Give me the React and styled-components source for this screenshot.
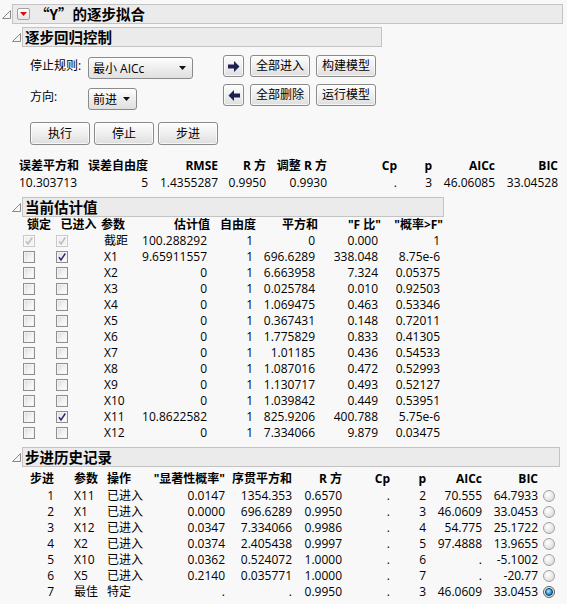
import React from "react";
import styled, { createGlobalStyle } from "styled-components";

const GlobalStyle = createGlobalStyle`
  body {
    margin: 0;
    background: #f8f8f8;
    font-family: "Open Sans", "Noto Sans CJK SC", sans-serif;
    font-size: 12px;
    color: #000;
  }
`;

const statsCols = [
  { w: 69, a: "left" },
  { w: 66, a: "right" },
  { w: 70, a: "right" },
  { w: 48, a: "right" },
  { w: 61, a: "right" },
  { w: 70, a: "right" },
  { w: 35, a: "right" },
  { w: 63, a: "right" },
  { w: 63, a: "right" },
];
const statsHead = ["误差平方和", "误差自由度", "RMSE", "R 方", "调整 R 方", "Cp", "p", "AICc", "BIC"];
const statsRow = ["10.303713", "5", "1.4355287", "0.9950", "0.9930", ".", "3", "46.06085", "33.04528"];

const estCols = [
  { w: 34, a: "left", pl: 1, ha: "center" },
  { w: 45, a: "left", pl: 0, ha: "center" },
  { w: 38, a: "left" },
  { w: 71, a: "right" },
  { w: 46, a: "right" },
  { w: 62, a: "right" },
  { w: 63, a: "right" },
  { w: 62, a: "right" },
];
const estHead = ["锁定", "已进入", "参数", "估计值", "自由度", "平方和", '"F 比"', '"概率>F"'];
const estimates = [
  ["截距", "100.288292", "1", "0", "0.000", "1", true, "fixed"],
  ["X1", "9.65911557", "1", "696.6289", "338.048", "8.75e-6", true],
  ["X2", "0", "1", "6.663958", "7.324", "0.05375"],
  ["X3", "0", "1", "0.025784", "0.010", "0.92503"],
  ["X4", "0", "1", "1.069475", "0.463", "0.53346"],
  ["X5", "0", "1", "0.367431", "0.148", "0.72011"],
  ["X6", "0", "1", "1.775829", "0.833", "0.41305"],
  ["X7", "0", "1", "1.01185", "0.436", "0.54533"],
  ["X8", "0", "1", "1.087016", "0.472", "0.52993"],
  ["X9", "0", "1", "1.130717", "0.493", "0.52127"],
  ["X10", "0", "1", "1.039842", "0.449", "0.53951"],
  ["X11", "10.8622582", "1", "825.9206", "400.788", "5.75e-6", true],
  ["X12", "0", "1", "7.334066", "9.879", "0.03475"],
];

const histCols = [
  { w: 51, a: "right", pr: 17 },
  { w: 33, a: "left" },
  { w: 44, a: "left" },
  { w: 80, a: "right" },
  { w: 67, a: "right" },
  { w: 50, a: "right" },
  { w: 48, a: "right" },
  { w: 36, a: "right" },
  { w: 56, a: "right" },
  { w: 56, a: "right" },
  { w: 18, a: "left", pl: 2 },
];
const histHead = ["步进", "参数", "操作", '"显著性概率"', "序贯平方和", "R 方", "Cp", "p", "AICc", "BIC", ""];
const history = [
  ["1", "X11", "已进入", "0.0147", "1354.353", "0.6570", ".", "2", "70.555", "64.7933"],
  ["2", "X1", "已进入", "0.0000", "696.6289", "0.9950", ".", "3", "46.0609", "33.0453"],
  ["3", "X12", "已进入", "0.0347", "7.334066", "0.9986", ".", "4", "54.775", "25.1722"],
  ["4", "X2", "已进入", "0.0374", "2.405438", "0.9997", ".", "5", "97.4888", "13.9655"],
  ["5", "X10", "已进入", "0.0362", "0.524072", "1.0000", ".", "6", ".", "-5.1002"],
  ["6", "X5", "已进入", "0.2140", "0.035771", "1.0000", ".", "7", ".", "-20.77"],
  ["7", "最佳", "特定", ".", ".", "0.9950", ".", "3", "46.0609", "33.0453", true],
];

const sum = (cols) => cols.reduce((s, c) => s + c.w, 0);

/* ---------- outline headers ---------- */

const Page = styled.div`
  width: 567px;
  box-sizing: border-box;
  padding: 4px 0 4px 2px;
`;

const HeaderRow = styled.div`
  display: flex;
  align-items: center;
  margin-top: ${(p) => p.$mt || 0}px;
`;

const TwistIcon = styled.svg`
  flex-shrink: 0;
  margin-right: 1px;
  margin-top: 1px;
`;

const HeaderBox = styled.div`
  box-sizing: border-box;
  width: ${(p) => p.$w}px;
  height: 20px;
  background: #ebebeb;
  border: 1px solid #c3c3c3;
  display: flex;
  align-items: center;
  padding-left: ${(p) => p.$pl}px;
  font-family: "Noto Sans CJK SC", sans-serif;
  font-weight: bold;
  font-size: 14.5px;
  line-height: 18px;
`;

const RedToggle = styled.span`
  box-sizing: border-box;
  width: 13px;
  height: 12px;
  border: 1px solid #a3a3a3;
  border-radius: 2px;
  background: linear-gradient(#ffffff, #e4e4e4);
  display: flex;
  align-items: center;
  justify-content: center;
  margin-right: 5px;
`;

const Content = styled.div`
  padding-left: 10px;
`;

const Twist = () => (
  <TwistIcon viewBox="0 0 9 9" width="9" height="9">
    <polygon points="0.5,8.5 8.5,8.5 8.5,0.5" fill="#f6f6f6" stroke="#8a8a8a" />
  </TwistIcon>
);

/* ---------- controls ---------- */

const ControlBody = styled.div`
  padding: 8px 0 0 18px;
`;

const TopArea = styled.div`
  display: flex;
  align-items: flex-start;
`;

const RuleGrid = styled.div`
  display: grid;
  grid-template-columns: 58px auto;
  row-gap: 9px;
  margin-top: 2px;
`;

const Label = styled.div`
  height: 22px;
  line-height: 16px;
  padding-top: 1px;
  box-sizing: border-box;
`;

const Select = styled.div`
  box-sizing: border-box;
  width: ${(p) => p.$w}px;
  height: 22px;
  border: 1px solid #8b8b8b;
  border-radius: 3px;
  background: linear-gradient(#fefefe, #ececec 55%, #e0e0e0);
  display: flex;
  align-items: center;
  justify-content: space-between;
  padding: 0 6px 0 4px;
`;

const ButtonGrid = styled.div`
  display: grid;
  grid-template-columns: 21px 60px 60px;
  column-gap: 6px;
  row-gap: 7px;
  margin-left: 30px;
`;

const Button = styled.div`
  box-sizing: border-box;
  width: ${(p) => p.$w || 60}px;
  height: ${(p) => p.$h || 22}px;
  border: 1px solid #8a8a8a;
  border-radius: 3px;
  background: linear-gradient(#fdfdfd, #efefef 50%, #dedede);
  box-shadow: inset 0 0 0 1px rgba(255, 255, 255, 0.7);
  display: flex;
  align-items: center;
  justify-content: center;
  line-height: 16px;
`;

const RunRow = styled.div`
  display: flex;
  gap: 4px;
  margin-top: 12px;
`;

const Arrow = ({ left }) => (
  <svg width="12" height="11" viewBox="0 0 12 11">
    <polygon
      points={left ? "12,3.5 6,3.5 6,0 0.5,5.5 6,11 6,7.5 12,7.5" : "0,3.5 6,3.5 6,0 11.5,5.5 6,11 6,7.5 0,7.5"}
      fill="#1b2050"
    />
  </svg>
);

const Caret = () => (
  <svg width="7" height="4" viewBox="0 0 7 4">
    <polygon points="0,0 7,0 3.5,4" fill="#111" />
  </svg>
);

/* ---------- tables ---------- */

const Table = styled.table`
  border-collapse: collapse;
  table-layout: fixed;
  width: ${(p) => p.$w}px;
  margin-left: ${(p) => p.$ml}px;
  margin-top: ${(p) => p.$mt || 0}px;
`;

const Col = styled.col`
  width: ${(p) => p.$w}px;
`;

const Cell = styled.td`
  height: ${(p) => p.$h || 16}px;
  padding: 0 ${(p) => p.$pr ?? 3}px 0 ${(p) => p.$pl ?? 3}px;
  text-align: ${(p) => p.$a};
  font-weight: ${(p) => (p.$bold ? "bold" : "normal")};
  white-space: nowrap;
  overflow: visible;
  line-height: 16px;
  vertical-align: middle;
`;

const Box = styled.span`
  box-sizing: border-box;
  display: flex;
  align-items: center;
  justify-content: center;
  width: 12px;
  height: 12px;
  border: 1px solid ${(p) => (p.$off ? "#c9c9c9" : "#8e8e8e")};
  background: ${(p) =>
    p.$off ? "#f2f2f2" : "linear-gradient(135deg, #d9d9d9, #f4f4f4 60%, #fdfdfd)"};
  box-shadow: inset 0 0 0 1px ${(p) => (p.$off ? "#fafafa" : "#f3f3f3")};
`;

const Radio = styled.span`
  box-sizing: border-box;
  display: flex;
  align-items: center;
  justify-content: center;
  width: 12px;
  height: 12px;
  border-radius: 50%;
  border: 1px solid ${(p) => (p.$on ? "#5a6470" : "#a2a2a2")};
  background: radial-gradient(circle at 40% 35%, #ffffff, #e8e8e8 55%, #cfcfcf);
`;

const RadioDot = styled.span`
  width: 6px;
  height: 6px;
  border-radius: 50%;
  background: radial-gradient(circle at 40% 35%, #b8ecff, #2a9ad8 55%, #0c5a92);
  border: 1px solid #163a5c;
`;

const Check = ({ on, off }) => (
  <Box $off={off}>
    {on && (
      <svg width="10" height="10" viewBox="0 0 10 10">
        <path
          d="M2 5.2 L4 8 L8.3 1.5"
          fill="none"
          stroke={off ? "#b9bccb" : "#2c2c6e"}
          strokeWidth="1.5"
        />
      </svg>
    )}
  </Box>
);

function Colgroup({ cols }) {
  return (
    <colgroup>
      {cols.map((c, i) => (
        <Col key={i} $w={c.w} />
      ))}
    </colgroup>
  );
}

function Section({ title, width, mt, children }) {
  return (
    <>
      <HeaderRow $mt={mt}>
        <Twist />
        <HeaderBox $w={width} $pl={2}>
          {title}
        </HeaderBox>
      </HeaderRow>
      {children}
    </>
  );
}

export default function App() {
  return (
    <>
      <GlobalStyle />
      <Page>
        <HeaderRow>
          <Twist />
          <HeaderBox $w={551} $pl={4}>
            <RedToggle>
              <svg width="7" height="4" viewBox="0 0 7 4">
                <polygon points="0,0 7,0 3.5,4" fill="#d10f0f" />
              </svg>
            </RedToggle>
            “Y”的逐步拟合
          </HeaderBox>
        </HeaderRow>

        <Content>
          <Section title="逐步回归控制" width={360} mt={3}>
            <ControlBody>
              <TopArea>
                <RuleGrid>
                  <Label>停止规则:</Label>
                  <Select $w={105}>
                    最小 AICc
                    <Caret />
                  </Select>
                  <Label>方向:</Label>
                  <Select $w={49}>
                    前进
                    <Caret />
                  </Select>
                </RuleGrid>
                <ButtonGrid>
                  <Button $w={21}>
                    <Arrow />
                  </Button>
                  <Button>全部进入</Button>
                  <Button>构建模型</Button>
                  <Button $w={21}>
                    <Arrow left />
                  </Button>
                  <Button>全部删除</Button>
                  <Button>运行模型</Button>
                </ButtonGrid>
              </TopArea>
              <RunRow>
                <Button $h={23}>执行</Button>
                <Button $h={23}>停止</Button>
                <Button $h={23}>步进</Button>
              </RunRow>
            </ControlBody>
          </Section>

          <Table $w={sum(statsCols)} $ml={4} $mt={12}>
            <Colgroup cols={statsCols} />
            <tbody>
              <tr>
                {statsHead.map((h, i) => (
                  <Cell key={i} $h={17} $a={statsCols[i].a} $bold>
                    {h}
                  </Cell>
                ))}
              </tr>
              <tr>
                {statsRow.map((v, i) => (
                  <Cell key={i} $h={17} $a={statsCols[i].a}>
                    {v}
                  </Cell>
                ))}
              </tr>
            </tbody>
          </Table>

          <Section title="当前估计值" width={422} mt={6}>
            <Table $w={sum(estCols)} $ml={10}>
              <Colgroup cols={estCols} />
              <tbody>
                <tr>
                  {estHead.map((h, i) => (
                    <Cell key={i} $a={estCols[i].ha || estCols[i].a} $pl={0} $pr={0} $bold>
                      {h}
                    </Cell>
                  ))}
                </tr>
                {estimates.map((r) => {
                  const fixed = r[7] === "fixed";
                  return (
                    <tr key={r[0]}>
                      <Cell $a="left" $pl={estCols[0].pl}>
                        <Check on={fixed} off={fixed} />
                      </Cell>
                      <Cell $a="left" $pl={estCols[1].pl}>
                        <Check on={!!r[6]} off={fixed} />
                      </Cell>
                      {r.slice(0, 6).map((v, i) => (
                        <Cell key={i} $a={estCols[i + 2].a}>
                          {v}
                        </Cell>
                      ))}
                    </tr>
                  );
                })}
              </tbody>
            </Table>
          </Section>

          <Section title="步进历史记录" width={538} mt={6}>
            <Table $w={sum(histCols)} $ml={8} $mt={3}>
              <Colgroup cols={histCols} />
              <tbody>
                <tr>
                  {histHead.map((h, i) => (
                    <Cell key={i} $h={18} $a={histCols[i].a} $pr={histCols[i].pr} $bold>
                      {h}
                    </Cell>
                  ))}
                </tr>
                {history.map((r) => (
                  <tr key={r[0]}>
                    {r.slice(0, 10).map((v, i) => (
                      <Cell key={i} $a={histCols[i].a} $pr={histCols[i].pr}>
                        {v}
                      </Cell>
                    ))}
                    <Cell $a="left" $pl={2}>
                      <Radio $on={!!r[10]}>{r[10] && <RadioDot />}</Radio>
                    </Cell>
                  </tr>
                ))}
              </tbody>
            </Table>
          </Section>
        </Content>
      </Page>
    </>
  );
}
